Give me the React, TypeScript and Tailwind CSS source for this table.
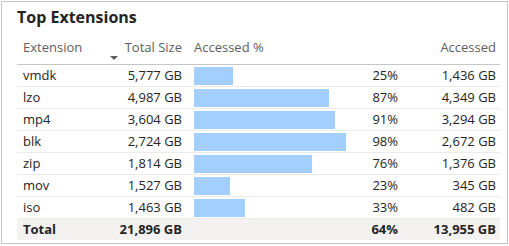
import React from "react";

interface Row {
  ext: string;
  size: string;
  pct: number;
  accessed: string;
}

const rows: Row[] = [
  { ext: "vmdk", size: "5,777 GB", pct: 25, accessed: "1,436 GB" },
  { ext: "lzo", size: "4,987 GB", pct: 87, accessed: "4,349 GB" },
  { ext: "mp4", size: "3,604 GB", pct: 91, accessed: "3,294 GB" },
  { ext: "blk", size: "2,724 GB", pct: 98, accessed: "2,672 GB" },
  { ext: "zip", size: "1,814 GB", pct: 76, accessed: "1,376 GB" },
  { ext: "mov", size: "1,527 GB", pct: 23, accessed: "345 GB" },
  { ext: "iso", size: "1,463 GB", pct: 33, accessed: "482 GB" },
];

const cols = "grid grid-cols-[91px_80px_216px_96px]";

export default function App() {
  return (
    <div className="w-[509px] h-[246px] bg-white pl-[1px] pt-[1px] font-['Segoe_UI','Open_Sans',sans-serif]">
      <div className="w-[507px] h-[243px] border border-[#c8c6c4] pl-[15px]">
        {/* Title */}
        <div className="pt-[4px] h-[26px] text-[16px] leading-[22px] font-bold text-[#252423]">
          Top Extensions
        </div>

        {/* Header */}
        <div className={`${cols} w-[483px] h-[37px] border-b border-[#c8c6c4] text-[13px] leading-[18px] text-[#605e5c]`}>
          <div className="pl-[6px] pt-[10px]">Extension</div>
          <div className="relative pr-[6px] pt-[10px] text-right">
            Total Size
            <span className="absolute left-[2px] top-[28px] w-0 h-0 border-l-[4px] border-r-[4px] border-t-[4px] border-l-transparent border-r-transparent border-t-[#605e5c]" />
          </div>
          <div className="pl-[6px] pt-[10px]">Accessed %</div>
          <div className="pr-[4px] pt-[10px] text-right">Accessed</div>
        </div>

        {/* Body */}
        {rows.map((r) => (
          <div
            key={r.ext}
            className={`${cols} w-[483px] h-[22px] border-b border-[#edebe9] text-[13px] leading-[21px] text-[#252423] items-center`}
          >
            <div className="pl-[6px]">{r.ext}</div>
            <div className="pr-[6px] text-right">{r.size}</div>
            <div className="flex items-center justify-between pl-[6px] pr-[6px]">
              <div className="w-[155px] h-[18px]">
                <div
                  className="h-full bg-[#a3cfff]"
                  style={{ width: `${r.pct}%` }}
                />
              </div>
              <span>{r.pct}%</span>
            </div>
            <div className="pr-[4px] text-right">{r.accessed}</div>
          </div>
        ))}

        {/* Total */}
        <div className={`${cols} w-[483px] h-[21px] bg-[#f3f2f1] text-[13px] leading-[21px] font-bold text-[#252423]`}>
          <div className="pl-[6px]">Total</div>
          <div className="pr-[6px] text-right">21,896 GB</div>
          <div className="pr-[6px] text-right">64%</div>
          <div className="pr-[4px] text-right">13,955 GB</div>
        </div>
      </div>
    </div>
  );
}
